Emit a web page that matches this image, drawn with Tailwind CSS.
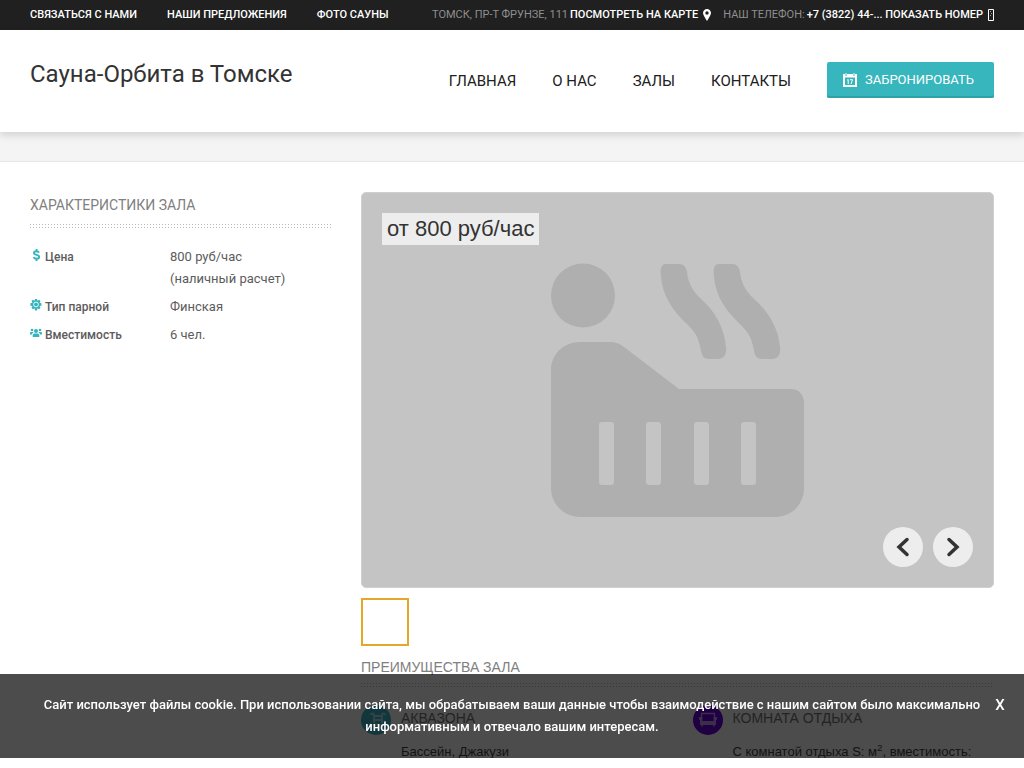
<!DOCTYPE html>
<html lang="ru">
<head>
<meta charset="utf-8">
<meta name="viewport" content="width=device-width, initial-scale=1">
<title>Сауна-Орбита в Томске</title>
<script src="https://cdn.jsdelivr.net/npm/@tailwindcss/browser@4"></script>
</head>
<body class="min-h-screen overflow-hidden bg-white font-['Roboto','Liberation_Sans',sans-serif] text-[13px] leading-[22px] text-[#5c5c5c]">
<div class="flex h-[30px] items-center justify-between bg-[#202020] px-[30px] text-[11px] font-medium uppercase text-white">
  <nav class="flex gap-[30px]" aria-label="Ссылки">
    <a href="#">Связаться с нами</a>
    <a href="#">Наши предложения</a>
    <a href="#">Фото сауны</a>
  </nav>
  <div class="flex gap-[12px] whitespace-nowrap">
    <div class="flex items-center gap-[2px]">
      <span class="font-normal text-[#8f8f8f]">Томск, пр-т Фрунзе, 111</span>
      <a href="#" class="flex items-center gap-[5px]">Посмотреть на карте
        <svg class="h-[12px] w-[8px]" viewBox="0 0 8 12" fill="currentColor" aria-hidden="true"><path fill-rule="evenodd" d="M4 0C1.800 0 0 1.800 0 4c0 2 2.500 5.500 4 8 1.500-2.500 4-6 4-8 0-2.200-1.800-4-4-4zm0 2.300a1.700 1.700 0 1 1 0 3.400 1.700 1.700 0 0 1 0-3.400z"/></svg></a>
    </div>
    <div class="flex items-center gap-[2px]">
      <span class="font-normal text-[#8f8f8f]">Наш телефон:</span>
      <a href="#" class="flex items-center gap-[5px]">+7 (3822) 44-... Показать номер
        <svg class="h-[12px] w-[6px]" viewBox="0 0 6 12" fill="none" stroke="currentColor" aria-hidden="true"><path d="M.5.5h5v11h-5z"/><path d="M2 2.500h1M3 4.500h1M2 6.500h1" stroke="#999"/></svg></a>
    </div>
  </div>
</div>

<header class="relative flex h-[102px] items-start justify-between bg-white px-[30px] pt-[32px] shadow-[0_3px_8px_rgba(0,0,0,0.15)]">
  <h1 class="text-[24px] leading-[24px] font-normal text-[#333]"><a href="#">Сауна-Орбита в Томске</a></h1>
  <div class="flex items-center gap-[36px]">
    <nav class="flex gap-[36px] pt-[2px] text-[15px] uppercase text-[#202020]" aria-label="Меню">
      <a href="#">Главная</a>
      <a href="#">О нас</a>
      <a href="#">Залы</a>
      <a href="#">Контакты</a>
    </nav>
    <button type="button" class="flex h-[36px] items-center gap-[8px] rounded-[2px] bg-[#37b6bd] pr-[20px] pl-[16px] text-[13px] uppercase text-white shadow-[inset_0_-2px_0_#2fa3a3]">
      <svg class="h-[14px] w-[14px]" viewBox="0 0 14 14" aria-hidden="true"><path fill="#fff" d="M0 1h2v1.500h2V1h6v1.500h2V1h2v13H0z"/><path fill="#fff" d="M2.500 0h1v2h-1zM10.500 0h1v2h-1z"/><path fill="#37b6bd" d="M2 4.500h10V12H2z"/><path fill="none" stroke="#fff" d="M4.200 7.200l1-.7V11M7 6.700h2.500L8 11"/></svg>
      Забронировать
    </button>
  </div>
</header>
<div class="h-[30px] border-b border-[#e8e8e8] bg-[#f4f4f4]"></div>

<main class="flex gap-[30px] px-[30px] pt-[30px]">
  <aside class="w-[301px] shrink-0">
    <h2 class="pt-[2px] text-[14px] uppercase text-[#808080]">Характеристики зала</h2>
    <svg class="mt-[8px] h-[5px] w-full" aria-hidden="true"><defs><pattern id="dots" width="3" height="4" patternUnits="userSpaceOnUse"><path fill="#bbb" d="M0 0h1v1H0zM0 3h1v1H0z"/></pattern></defs><rect width="100%" height="4" fill="url(#dots)"/></svg>
    <dl class="mt-[17px] grid grid-cols-[140px_1fr] gap-y-[6px]">
      <dt class="flex h-[22px] items-center gap-[3px] text-[12px] font-medium"><svg class="mb-[4px] h-[12px] w-[12px]" viewBox="0 0 12 12" fill="none" stroke="#36b3bd" stroke-width="1.900" aria-hidden="true"><path d="M9 3.600C8.500 2.600 7.600 2.200 6.500 2.200 5 2.200 4 2.900 4 4c0 2.500 5.200 1.200 5.200 3.800 0 1.200-1.100 2-2.700 2C5.200 9.800 4.100 9.300 3.600 8.100M6.500 0v2.500M6.500 9.500V12"/></svg>Цена</dt>
      <dd>800 руб/час<br>(наличный расчет)</dd>
      <dt class="flex items-center gap-[3px] text-[12px] font-medium"><svg class="mb-[4px] h-[12px] w-[12px]" viewBox="0 0 12 12" aria-hidden="true"><path fill="#36b3bd" d="M5 0h2l.4 1.700 1.700-1 1.400 1.400-1 1.700 1.900.5v2.400l-1.900.4 1 1.700-1.400 1.400-1.700-1L7 11.500H5l-.4-2.300-1.700 1-1.400-1.400 1-1.700L.4 6.700V4.300l2.100-.5-1-1.700L2.900.7l1.700 1z"/><circle cx="6" cy="5.500" r="2.400" fill="none" stroke="#fff" stroke-width=".9"/></svg>Тип парной</dt>
      <dd>Финская</dd>
      <dt class="flex items-center gap-[3px] text-[12px] font-medium"><svg class="mb-[4px] h-[12px] w-[12px]" viewBox="0 0 12 12" fill="#36b3bd" aria-hidden="true"><circle cx="6" cy="4" r="2"/><circle cx="2" cy="3" r="1.300"/><circle cx="10" cy="3" r="1.300"/><path d="M2.700 10V8.300c0-1.500 1.300-1.800 3.300-1.800s3.300.3 3.300 1.800V10zM0 7.500V6c0-1 1-1.300 3-1l.5.800C2.500 6 2.300 6.500 2 7.500zM12 7.500V6c0-1-1-1.300-3-1l-.5.800c1 .2 1.200.7 1.500 1.700z"/></svg>Вместимость</dt>
      <dd>6 чел.</dd>
    </dl>
  </aside>

  <section class="min-w-0 flex-1 font-['Liberation_Sans',sans-serif]">
    <div class="relative flex h-[396px] items-center justify-center rounded-[5px] border border-[#cfcfcf] bg-[#c4c4c4]">
      <svg class="h-[254px] w-[254px]" viewBox="551 263 254 254" fill="#afafaf" aria-label="Сауна"><circle cx="583" cy="295.500" r="32"/><path d="M551 370c0-16 13-28 29-28h29c6 0 10 1 15 5l55 42h112c8 0 13 6 13 14v85c0 16-12 29-29 29H580c-16 0-29-13-29-29z"/><path d="M666 264h13c5 0 7 3 8 8 1 10 5 18 13 26 14 12 24 28 26 49 1 7-2 12-8 12h-9c-5 0-7-3-8-8-2-12-5-18-13-26-15-14-25-28-27-48-1-8 0-13 5-13zM719 264h13c5 0 7 3 8 8 1 10 5 18 13 26 14 12 25 28 27 49 1 7-2 12-8 12h-10c-5 0-7-3-8-8-2-12-5-18-13-26-15-14-25-28-27-48-1-8 0-13 5-13z"/><g fill="#c4c4c4"><rect x="599" y="422" width="15" height="63" rx="3"/><rect x="646" y="422" width="15" height="63" rx="3"/><rect x="694" y="422" width="15" height="63" rx="3"/><rect x="741" y="422" width="15" height="63" rx="3"/></g></svg>
      <div class="absolute top-[20px] left-[20px] bg-[#ededed] px-[5px] text-[22px] leading-[32px] text-[#333]">от 800 руб/час</div>
      <div class="absolute right-[20px] bottom-[20px] flex gap-[10px]">
        <button type="button" aria-label="Назад" class="grid size-[40px] place-items-center rounded-full bg-[#ededed]"><svg class="size-[20px]" viewBox="0 0 20 20" fill="none" stroke="#333" stroke-width="3.500" stroke-linecap="round" aria-hidden="true"><path d="M14 2.500 6 10l8 7.500"/></svg></button>
        <button type="button" aria-label="Вперёд" class="grid size-[40px] place-items-center rounded-full bg-[#ededed]"><svg class="size-[20px]" viewBox="0 0 20 20" fill="none" stroke="#333" stroke-width="3.500" stroke-linecap="round" aria-hidden="true"><path d="M6 2.500 14 10l-8 7.500"/></svg></button>
      </div>
    </div>
    <button type="button" aria-label="Фото 1" class="mt-[10px] block size-[48px] border-2 border-[#e3a827]"></button>
    <h2 class="mt-[10px] text-[14px] uppercase text-[#808080]">Преимущества зала</h2>
    <svg class="mt-[5px] h-[4px] w-full" aria-hidden="true"><rect width="100%" height="4" fill="url(#dots)"/></svg>
    <div class="mt-[18px] grid grid-cols-2 gap-x-[30px]">
      <div class="flex gap-[10px]">
        <svg class="size-[30px] shrink-0" viewBox="0 0 30 30" aria-hidden="true"><circle cx="15" cy="15" r="15" fill="#3ab4c8"/><path fill="none" stroke="#fff" stroke-opacity=".6" stroke-width="1.800" d="M13 18V10c0-2-3-2-3 0M21 18V10c0-2 3-2 3 0M13 11h8M13 15h8M8 20c2-2 3 1 5 0s3-1 5 0 3 1 6-1"/></svg>
        <div><h3 class="text-[14px] leading-[27px] uppercase text-[#777]">Аквазона</h3><p class="mt-[9px] text-[#444]">Бассейн, Джакузи</p></div>
      </div>
      <div class="flex gap-[10px]">
        <svg class="size-[30px] shrink-0" viewBox="0 0 30 30" aria-hidden="true"><circle cx="15" cy="15" r="15" fill="#6a00e0"/><path fill="none" stroke="#fff" stroke-opacity=".6" stroke-width="1.300" d="M8.500 12V8.500h13V12"/><path fill="#fff" fill-opacity=".6" d="M6 12h3.500v4h11v-4H24v3h-1v5h-1.500v1.500H20V20H10v1.500H8.500V20H7v-5H6z"/></svg>
        <div><h3 class="text-[14px] leading-[27px] uppercase text-[#777]">Комната отдыха</h3><p class="mt-[9px] whitespace-nowrap text-[#444]">С комнатой отдыха S: м<sup>2</sup>, вместимость:</p></div>
      </div>
    </div>
  </section>
</main>

<div role="dialog" aria-label="Cookie" class="fixed inset-x-0 bottom-[10px] h-[84px] bg-black/70 px-[36px] pt-[20px] text-[13px] leading-[22px] font-medium text-white">
  <p class="text-center">Сайт использует файлы cookie. При использовании сайта, мы обрабатываем ваши данные чтобы взаимодействие с нашим сайтом было максимально информативным и отвечало вашим интересам.</p>
  <button type="button" class="absolute top-[20px] right-0 w-[48px] text-[15px] font-medium" aria-label="Закрыть">X</button>
</div>
<div class="fixed inset-x-0 bottom-0 h-[10px] bg-white"></div>
</body>
</html>
